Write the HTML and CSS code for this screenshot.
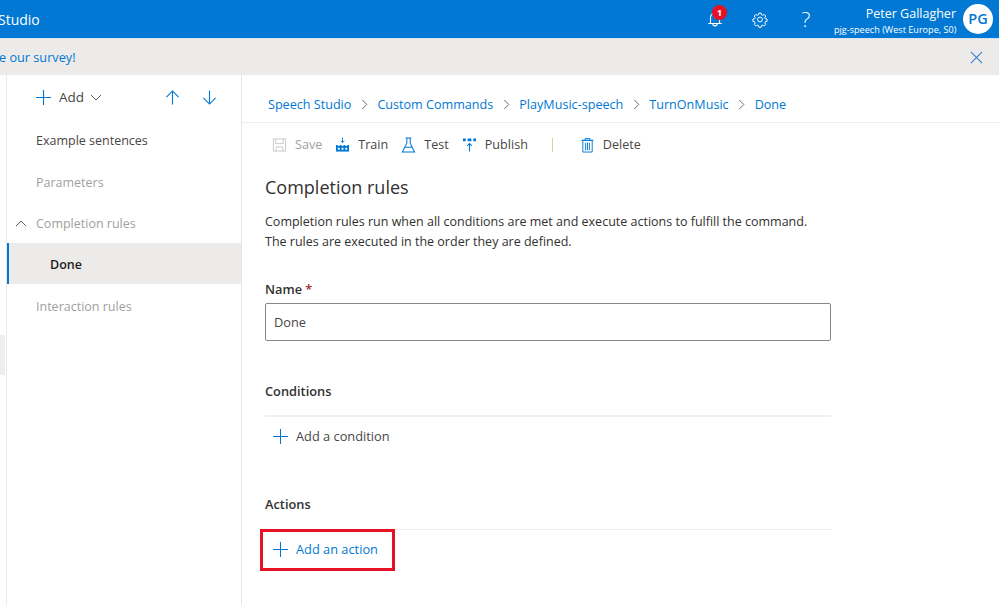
FILE: index.html
```html
<!DOCTYPE html>
<html lang="en">
<head>
<meta charset="utf-8">
<title>Completion rules</title>
<link rel="stylesheet" href="styles.css">
</head>
<body>
<header class="topbar">
  <div class="brand">Studio</div>
  <div class="top-actions">
    <div class="bell">
      <svg class="ico-top" viewBox="0 0 20 20"><path d="M5 15V8.500a5 5 0 0 1 10 0V15M2.500 15h15M7.500 15c0 3.500 5 3.500 5 0" fill="none" stroke="#fff" stroke-width="1.200"/></svg>
      <span class="badge">1</span>
    </div>
    <svg class="ico-top gear" viewBox="0 0 20 20"><path d="M8.500 2.500h3l.5 2.300 1.600.7 2-1.200 2 2.100-1.200 2 .6 1.600 2.300.5v3l-2.300.5-.6 1.600 1.200 2-2 2-2-1.200-1.600.7-.5 2.300h-3l-.5-2.300-1.600-.7-2 1.200-2-2 1.200-2-.7-1.600-2.300-.5v-3l2.300-.5.7-1.600-1.200-2 2-2.100 2 1.200 1.600-.7z" transform="translate(1.600 1.300) scale(.84)" fill="none" stroke="#fff" stroke-width="1.300"/><circle cx="10" cy="10.500" r="2.700" fill="none" stroke="#fff" stroke-width="1.100"/></svg>
    <div class="help">?</div>
    <div class="user">
      <div class="user-name">Peter Gallagher</div>
      <div class="user-sub">pjg-speech (West Europe, S0)</div>
    </div>
    <div class="avatar">PG</div>
  </div>
</header>
<div class="banner">
  <a class="survey">e our survey!</a>
  <svg class="close" viewBox="0 0 14 14"><path d="M1 1l12 12M13 1L1 13" fill="none" stroke="#2b7cd3" stroke-width="1.100"/></svg>
</div>
<div class="main">
  <div class="rail"><div class="rail-mark"></div></div>
  <aside class="side">
    <div class="side-tools">
      <svg class="plus" viewBox="0 0 16 16"><path d="M8 0v16M0 8h16" stroke="#0078d4" stroke-width="1.200"/></svg>
      <span class="add-label">Add</span>
      <svg class="chev" viewBox="0 0 12 7"><path d="M1 1l5 5 5-5" fill="none" stroke="#605e5c" stroke-width="1"/></svg>
      <svg class="arrow up" viewBox="0 0 16 16"><path d="M8 15.500V1M1.500 7.500L8 1l6.500 6.500" fill="none" stroke="#0078d4" stroke-width="1.200"/></svg>
      <svg class="arrow" viewBox="0 0 16 16"><path d="M8 .5V15M1.500 8.500L8 15l6.500-6.500" fill="none" stroke="#0078d4" stroke-width="1.200"/></svg>
    </div>
    <div class="nav-item dark">Example sentences</div>
    <div class="nav-item">Parameters</div>
    <div class="nav-item has-chev">
      <svg class="nav-chev" viewBox="0 0 12 7"><path d="M1 6l5-5 5 5" fill="none" stroke="#605e5c" stroke-width="1"/></svg>
      Completion rules
    </div>
    <div class="nav-item selected">Done</div>
    <div class="nav-item">Interaction rules</div>
  </aside>
  <section class="content">
    <nav class="crumbs">
      <a>Speech Studio</a><svg class="sep" viewBox="0 0 7 12"><path d="M1 1l5 5-5 5" fill="none" stroke="#605e5c"/></svg>
      <a>Custom Commands</a><svg class="sep" viewBox="0 0 7 12"><path d="M1 1l5 5-5 5" fill="none" stroke="#605e5c"/></svg>
      <a>PlayMusic-speech</a><svg class="sep" viewBox="0 0 7 12"><path d="M1 1l5 5-5 5" fill="none" stroke="#605e5c"/></svg>
      <a>TurnOnMusic</a><svg class="sep" viewBox="0 0 7 12"><path d="M1 1l5 5-5 5" fill="none" stroke="#605e5c"/></svg>
      <a>Done</a>
    </nav>
    <div class="toolbar">
      <span class="tool off">
        <svg class="tool-ico" viewBox="0 0 16 16"><path d="M1.500 1.500h13v13h-13zM4 1.500v5h8v-5M4.500 14.500v-4.500h7v4.500" fill="none" stroke="#c8c6c4"/></svg>Save
      </span>
      <span class="tool">
        <svg class="tool-ico" viewBox="0 0 16 16"><path d="M8 0v5M6 3.500L8 5.500l2-2" fill="none" stroke="#0078d4"/><path d="M1 8h14v7H1z" fill="#0078d4"/><path d="M3 7h2v2H3zM7 7h2v2H7zM11 7h2v2h-2zM3 11h2v2H3zM7 11h2v2H7zM11 11h2v2h-2z" fill="#fff"/></svg>Train
      </span>
      <span class="tool">
        <svg class="tool-ico" viewBox="0 0 16 16"><path d="M5 .5h6M6.200 .5v5.500L1.500 15.500h13L9.800 6V.5M4 10.500h8" fill="none" stroke="#0078d4" stroke-width="1.100"/></svg>Test
      </span>
      <span class="tool">
        <svg class="tool-ico" viewBox="0 0 16 16"><path d="M1 1h3v3H1zM6 1h4v3H6zM12 1h3v3h-3z" fill="#0078d4"/><path d="M8 15V7M5.500 9L8 6.500 10.500 9" fill="none" stroke="#0078d4" stroke-width="1.100"/></svg>Publish
      </span>
      <span class="tool-sep"></span>
      <span class="tool">
        <svg class="tool-ico" viewBox="0 0 16 16"><path d="M1.500 3h13M5.500 3V1h5v2M3 3h10v12.500H3zM6 5.500v8M8 5.500v8M10 5.500v8" fill="none" stroke="#0078d4"/></svg>Delete
      </span>
    </div>
    <div class="form">
      <h1 class="title">Completion rules</h1>
      <p class="desc">Completion rules run when all conditions are met and execute actions to fulfill the command.<br>The rules are executed in the order they are defined.</p>
      <label class="label name-label">Name <span class="req">*</span></label>
      <div class="input">Done</div>
      <h2 class="label cond">Conditions</h2>
      <div class="add-row">
        <svg class="plus-sm" viewBox="0 0 16 16"><path d="M8 0v16M0 8h16" stroke="#0078d4" stroke-width="1.100"/></svg>
        <span>Add a condition</span>
      </div>
      <h2 class="label actions">Actions</h2>
      <div class="add-wrap">
        <div class="add-row action">
          <svg class="plus-sm" viewBox="0 0 16 16"><path d="M8 0v16M0 8h16" stroke="#0078d4" stroke-width="1.100"/></svg>
          <span>Add an action</span>
        </div>
      </div>
    </div>
  </section>
</div>
</body>
</html>
```
FILE: styles.css
```css
* { box-sizing: border-box; }
html, body { margin: 0; height: 100%; overflow: hidden; }
body {
  background: #fff;
  color: #323130;
  font-family: "Open Sans", "Noto Sans", sans-serif;
  font-size: 13px;
}
.topbar {
  height: 38px;
  background: #0078d4;
  color: #fff;
  display: flex;
  align-items: center;
  justify-content: space-between;
}
.brand { font-size: 14px; margin-left: -2px; }
.top-actions { display: flex; align-items: center; }
.bell { position: relative; width: 18px; height: 18px; margin-right: 27px; }
.ico-top { width: 18px; height: 18px; display: block; }
.gear { margin-right: 31px; }
.badge {
  position: absolute;
  left: 6px;
  top: -5px;
  width: 15px;
  height: 15px;
  border-radius: 50%;
  background: #e81123;
  color: #fff;
  font-size: 9.500px;
  font-weight: 700;
  text-align: center;
  line-height: 15px;
}
.help { font-size: 21px; font-weight: 300; width: 12px; margin-right: 22px; text-align: center; }
.user { text-align: right; width: 122px; margin-right: 7px; padding-top: 4px; }
.user-name { font-size: 12.500px; line-height: 16px; }
.user-sub { font-size: 9.100px; line-height: 14px; margin-top: 1px; white-space: nowrap; }
.avatar {
  width: 30px;
  height: 30px;
  margin-right: 6px;
  border-radius: 50%;
  background: #fff;
  color: #0078d4;
  font-size: 14.500px;
  font-weight: 600;
  text-align: center;
  line-height: 30px;
}
.banner {
  height: 37px;
  background: #edebe9;
  border-top: 1px solid #d9e4ee;
  display: flex;
  align-items: center;
  justify-content: space-between;
  padding-right: 16px;
}
.survey { color: #0078d4; font-size: 12.700px; margin-left: -1px; }
.close { width: 13px; height: 13px; }
.main { display: flex; height: 530px; }
.rail {
  width: 7px;
  background: #fff;
  border-right: 1px solid #e8e8e8;
  padding-top: 260px;
  flex: none;
}
.rail-mark { width: 5px; height: 40px; background: #efeeed; }
.side {
  width: 235px;
  flex: none;
  border-right: 1px solid #e6e6e6;
}
.side-tools { height: 43px; display: flex; align-items: center; padding: 1px 0 0 29px; }
.plus { width: 15px; height: 15px; }
.add-label { font-size: 13.500px; color: #484644; margin: 0 6px 0 8px; }
.chev { width: 12px; height: 7px; }
.arrow { width: 15px; height: 15px; margin-left: 22px; }
.arrow.up { margin-left: 63px; }
.nav-item {
  height: 41.500px;
  display: flex;
  align-items: center;
  padding: 4px 0 0 29px;
  color: #a19f9d;
  font-size: 12.500px;
}
.nav-item.dark { color: #484644; }
.has-chev { padding-left: 8px; gap: 9px; }
.nav-chev { width: 12px; height: 7px; }
.selected {
  background: #edebe9;
  border-left: 2px solid #0078d4;
  color: #201f1e;
  font-weight: 600;
  padding: 2px 0 0 41px;
}
.content { flex: 1; min-width: 0; }
.crumbs {
  height: 48px;
  border-bottom: 1px solid #eee;
  display: flex;
  align-items: center;
  padding: 12px 0 0 26px;
  color: #0078d4;
  font-size: 12.600px;
}
.sep { width: 7px; height: 11px; margin: 0 9.500px; }
.toolbar {
  height: 43px;
  display: flex;
  align-items: center;
  padding: 0 0 0 30px;
  font-size: 12.600px;
}
.tool { display: inline-flex; align-items: center; gap: 8px; margin-right: 13px; color: #484644; }
.tool.off { color: #a19f9d; }
.tool-ico { width: 15px; height: 16px; }
.tool-sep { width: 1px; height: 14px; background: #d6d2a8; margin: 0 27px 0 11px; }
.form { width: 589px; padding-left: 23px; }
.title { margin: 8px 0 0; font-size: 18px; font-weight: 400; line-height: 26px; color: #323130; }
.desc { margin: 12px 0 0; font-size: 12.500px; line-height: 19.500px; color: #323130; }
.label { display: block; margin: 0; font-size: 12.800px; font-weight: 600; line-height: 20px; color: #323130; }
.name-label { margin-top: 28px; }
.req { color: #a4262c; }
.input {
  margin-top: 4px;
  height: 38px;
  border: 1px solid #8a8886;
  border-radius: 2px;
  padding-left: 8px;
  line-height: 36px;
  font-size: 12.800px;
  color: #484644;
}
.cond { margin-top: 40px; }
.add-row {
  display: flex;
  align-items: center;
  gap: 8px;
  height: 40px;
  margin-top: 14px;
  border-top: 2px solid #f0f0f0;
  padding-left: 8px;
  font-size: 12.800px;
  color: #484644;
}
.plus-sm { width: 15px; height: 15px; }
.actions { margin-top: 39px; }
.add-wrap { margin-top: 15px; border-top: 1px solid #eee; }
.add-row.action {
  width: 135px;
  height: 42px;
  margin: -1px 0 0 -5px;
  border: 3px solid #e81123;
  padding: 0 0 2px 10px;
  color: #0078d4;
}
```
